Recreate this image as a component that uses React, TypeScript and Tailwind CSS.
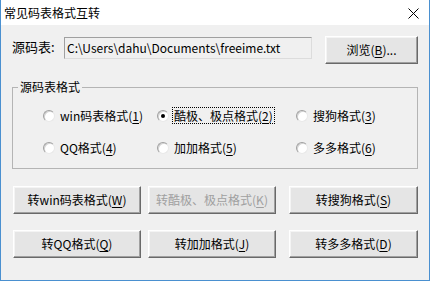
import type { ReactNode } from "react";

const FONT = "font-['Microsoft_YaHei','Noto_Sans_CJK_SC',sans-serif]";

function Mn({ children }: { children: ReactNode }) {
  return <span className="underline underline-offset-2">{children}</span>;
}

function Btn({
  children,
  className = "",
  disabled = false,
}: {
  children: ReactNode;
  className?: string;
  disabled?: boolean;
}) {
  return (
    <button
      disabled={disabled}
      className={`h-[28px] flex items-center justify-center bg-[#e5e5e5] border-t border-l border-[#ffffff] border-b border-r border-b-[#696969] border-r-[#696969] shadow-[inset_-1px_-1px_#a0a0a0,inset_1px_1px_#f4f4f4] text-[12px] leading-none ${
        disabled ? "text-[#a0a0a0]" : "text-black"
      } ${className}`}
    >
      {children}
    </button>
  );
}

function Radio({
  checked = false,
  focused = false,
  children,
  className = "",
}: {
  checked?: boolean;
  focused?: boolean;
  children: ReactNode;
  className?: string;
}) {
  return (
    <label className={`flex items-center ${className}`}>
      <span className="relative w-[12px] h-[12px] rounded-full bg-white border border-t-[#a0a0a0] border-l-[#a0a0a0] border-b-[#e8e8e8] border-r-[#e8e8e8] shadow-[inset_1px_1px_#d4d4d4] flex items-center justify-center">
        {checked && <span className="w-[4px] h-[4px] rounded-full bg-black" />}
      </span>
      <span
        className={`ml-[4px] px-[1px] text-[12px] leading-[15px] ${
          focused ? "outline outline-1 outline-dotted outline-black" : ""
        }`}
      >
        {children}
      </span>
    </label>
  );
}

export default function App() {
  return (
    <div
      className={`w-[430px] h-[281px] flex flex-col bg-[#f0f0f0] border-x border-b border-[#4a90d0] text-black ${FONT}`}
    >
      <div className="h-[25px] bg-white flex items-center justify-between pl-[3px] pr-[10px]">
        <span className="text-[12px]">常见码表格式互转</span>
        <svg width="11" height="11" viewBox="0 0 11 11" className="mt-[1px]">
          <path d="M0.5 0.5L10.5 10.5M10.5 0.5L0.5 10.5" stroke="#000" strokeWidth="1" />
        </svg>
      </div>

      <div className="flex flex-col px-[11px]">
        <div className="flex items-start mt-[12px]">
          <span className="text-[13px] leading-[15px] mt-[2px] w-[52px]">源码表:</span>
          <div className="w-[248px] h-[22px] flex items-center pl-[2px] bg-[#f0f0f0] border border-t-[#a0a0a0] border-l-[#a0a0a0] border-b-[#dcdcdc] border-r-[#dcdcdc] text-[12px] leading-none">
            C:\Users\dahu\Documents\freeime.txt
          </div>
          <Btn className="w-[93px] ml-[13px] -mt-[1px]">
            浏览(<Mn>B</Mn>)...
          </Btn>
        </div>

        <fieldset className="mt-[16px] h-[89px] w-[406px] border border-[#b4b4b4] pt-[14px]">
          <legend className="ml-[5px] px-[2px] text-[12px] leading-[14px]">源码表格式</legend>
          <div className="flex pl-[30px]">
            <Radio className="w-[114px]">
              win码表格式(<Mn>1</Mn>)
            </Radio>
            <Radio checked focused className="w-[139px]">
              酷极、极点格式(<Mn>2</Mn>)
            </Radio>
            <Radio>
              搜狗格式(<Mn>3</Mn>)
            </Radio>
          </div>
          <div className="flex mt-[17px] pl-[30px]">
            <Radio className="w-[114px]">
              QQ格式(<Mn>4</Mn>)
            </Radio>
            <Radio className="w-[139px]">
              加加格式(<Mn>5</Mn>)
            </Radio>
            <Radio>
              多多格式(<Mn>6</Mn>)
            </Radio>
          </div>
        </fieldset>

        <div className="flex mt-[17px] pl-[1px]">
          <Btn className="w-[128px]">
            转win码表格式(<Mn>W</Mn>)
          </Btn>
          <Btn disabled className="w-[128px] ml-[7px]">
            转酷极、极点格式(<Mn>K</Mn>)
          </Btn>
          <Btn className="w-[129px] ml-[13px]">
            转搜狗格式(<Mn>S</Mn>)
          </Btn>
        </div>
        <div className="flex mt-[16px] pl-[1px]">
          <Btn className="w-[128px]">
            转QQ格式(<Mn>Q</Mn>)
          </Btn>
          <Btn className="w-[128px] ml-[7px]">
            转加加格式(<Mn>J</Mn>)
          </Btn>
          <Btn className="w-[129px] ml-[13px]">
            转多多格式(<Mn>D</Mn>)
          </Btn>
        </div>
      </div>
    </div>
  );
}
